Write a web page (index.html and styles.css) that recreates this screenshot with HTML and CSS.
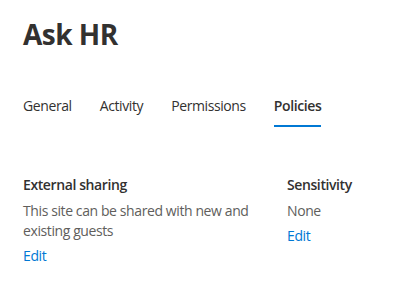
FILE: index.html
```html
<!DOCTYPE html>
<html>
<head>
<meta charset="utf-8">
<link rel="stylesheet" href="styles.css">
</head>
<body>
<div class="page">
  <h1 class="title">Ask HR</h1>
  <nav class="tabs">
    <span class="tab">General</span>
    <span class="tab">Activity</span>
    <span class="tab">Permissions</span>
    <span class="tab active">Policies</span>
  </nav>
  <div class="sections">
    <div class="section left">
      <div class="heading">External sharing</div>
      <div class="text">This site can be shared with new and existing guests</div>
      <a class="link">Edit</a>
    </div>
    <div class="section right">
      <div class="heading">Sensitivity</div>
      <div class="text">None</div>
      <a class="link">Edit</a>
    </div>
  </div>
</div>
</body>
</html>
```
FILE: styles.css
```css
html, body {
  margin: 0;
  padding: 0;
  background: #ffffff;
}
body {
  font-family: "Open Sans", "Noto Sans", sans-serif;
  color: #323130;
  letter-spacing: -0.4px;
}
.page {
  padding: 14px 23px 0 23px;
}
.title {
  margin: 0;
  font-size: 28px;
  font-weight: 700;
  line-height: 40px;
  letter-spacing: -0.5px;
  color: #323130;
}
.tabs {
  display: flex;
  gap: 28px;
  margin-top: 42px;
}
.tab {
  font-size: 14px;
  line-height: 20px;
  padding-bottom: 9px;
  border-bottom: 2px solid transparent;
  color: #323130;
}
.tab.active {
  font-weight: 600;
  border-bottom-color: #0078d4;
}
.sections {
  display: flex;
  margin-top: 48px;
}
.section {
  display: flex;
  flex-direction: column;
  align-items: flex-start;
}
.left {
  width: 236px;
  margin-right: 28px;
}
.heading {
  font-size: 14px;
  font-weight: 600;
  line-height: 20px;
  color: #323130;
  margin-bottom: 6px;
}
.text {
  font-size: 14px;
  line-height: 20px;
  color: #605e5c;
}
.link {
  font-size: 14px;
  line-height: 20px;
  color: #0078d4;
  margin-top: 5px;
  cursor: pointer;
}
```
